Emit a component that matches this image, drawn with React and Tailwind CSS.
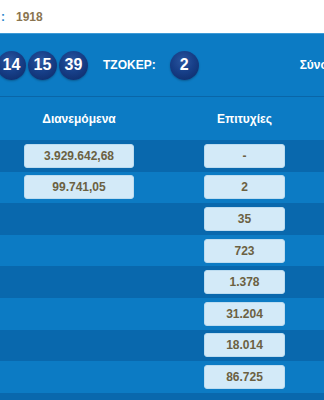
const BALLS = ['14', '15', '39'];

const ROWS = [
  { amount: '3.929.642,68', wins: '-' },
  { amount: '99.741,05', wins: '2' },
  { amount: null, wins: '35' },
  { amount: null, wins: '723' },
  { amount: null, wins: '1.378' },
  { amount: null, wins: '31.204' },
  { amount: null, wins: '18.014' },
  { amount: null, wins: '86.725' },
  { amount: null, wins: '' },
];

function Ball({ n }) {
  return (
    <div className="w-[29px] h-[29px] shrink-0 rounded-full flex items-center justify-center bg-[radial-gradient(circle_at_45%_35%,#2a56a0_0%,#173f88_45%,#0c2864_100%)] shadow-[0_1px_2px_rgba(0,0,0,0.25)]">
      <span className="text-white text-[16px] font-bold leading-none">{n}</span>
    </div>
  );
}

function Box({ children, w }) {
  return (
    <div className={`${w} h-[24px] rounded-[3px] bg-[#d3eaf8] border border-[#bcdcf0] flex items-center justify-center text-[12px] font-bold text-[#6b6142]`}>
      {children}
    </div>
  );
}

export default function App() {
  return (
    <div className="w-[324px] h-[400px] overflow-hidden bg-white font-['Liberation_Sans',Arial,sans-serif]">
      {/* draw number line */}
      <div className="h-[33px] flex items-center text-[12px] font-bold">
        <span className="text-[#2a86cc] ml-[1px]">:</span>
        <span className="ml-[11px] text-[#8a7550]">1918</span>
      </div>

      {/* winning numbers band */}
      <div className="h-[64px] bg-[#0c7bc4] border-t border-[#3d9ad6] border-b border-b-[#0a66a8] flex items-center whitespace-nowrap">
        <div className="flex items-center gap-[2px] -ml-[3px]">
          {BALLS.map((b) => (
            <Ball key={b} n={b} />
          ))}
        </div>
        <span className="ml-[15px] text-white text-[12px] font-bold">TZOKEP:</span>
        <div className="ml-[14px]">
          <Ball n="2" />
        </div>
        <span className="ml-[101px] text-white text-[12px] font-bold">Σύνολο Στηλών:</span>
      </div>

      {/* table header */}
      <div className="h-[43px] bg-[#0c7bc4] flex items-center text-white text-[12px] font-bold">
        <div className="w-[158px] shrink-0 text-center">Διανεμόμενα</div>
        <div className="w-[173px] shrink-0 text-center">Επιτυχίες</div>
      </div>

      {/* rows */}
      {ROWS.map((r, i) => (
        <div
          key={i}
          className={`h-[31.6px] flex items-center ${i % 2 === 0 ? 'bg-[#0968ad]' : 'bg-[#0c7bc4]'}`}
        >
          <div className="w-[158px] shrink-0 flex justify-center">
            {r.amount && <Box w="w-[110px]">{r.amount}</Box>}
          </div>
          <div className="w-[173px] shrink-0 flex justify-center">
            {r.wins !== '' && <Box w="w-[81px]">{r.wins}</Box>}
          </div>
        </div>
      ))}
    </div>
  );
}
